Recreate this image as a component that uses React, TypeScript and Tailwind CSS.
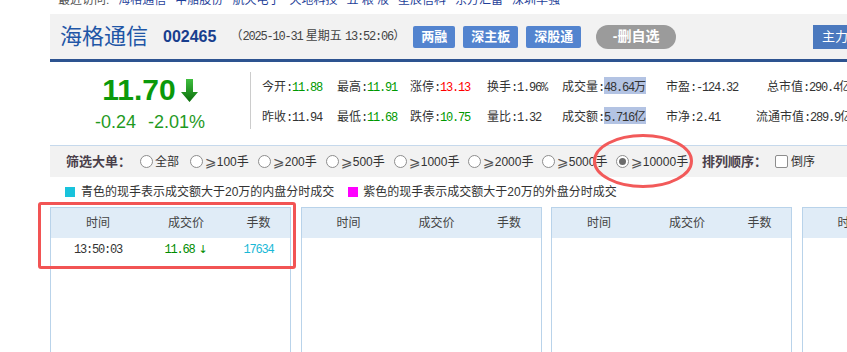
const mono = "font-['Liberation_Mono','Noto_Sans_CJK_SC',monospace] text-[12px] tracking-[-1.2px]";

type CellProps = {
  label: string;
  value: string;
  unit?: string;
  tone?: "up" | "down";
  hl?: boolean;
  w: string;
  right?: boolean;
};

function Cell({ label, value, unit, tone, hl, w, right }: CellProps) {
  const color = tone === "up" ? "text-[#ff0000]" : tone === "down" ? "text-[#009900]" : "text-[#333]";
  return (
    <div className={`${w} shrink-0 whitespace-nowrap ${right ? "text-right" : ""}`}>
      <span className="text-[12px] text-[#333]">{label}</span>
      <span className={`${mono} text-[#333]`}>:</span>
      <span className={hl ? "bg-[#b3c3e3]" : ""}>
        <span className={`${mono} ${color}`}>{value}</span>
        {unit && <span className={`text-[12px] ${color}`}>{unit}</span>}
      </span>
    </div>
  );
}

function Radio({ label, num, checked }: { label?: string; num?: string; checked?: boolean }) {
  return (
    <div className="flex items-center gap-[2px] text-[12px] text-[#333]">
      <span className="flex h-[13px] w-[13px] items-center justify-center rounded-full border border-[#8d8d8d] bg-white">
        {checked && <span className="h-[7px] w-[7px] rounded-full bg-[#6b6b6b]" />}
      </span>
      {label ? (
        <span>{label}</span>
      ) : (
        <span className="flex items-center">
          <span className="font-['DejaVu_Sans',sans-serif] text-[14px] leading-none text-[#555]">⩾</span>
          <span className="text-[12px]">{num}</span>
          <span>手</span>
        </span>
      )}
    </div>
  );
}

function Panel({ rows }: { rows?: boolean }) {
  return (
    <div className="h-[160px] w-[241px] shrink-0 border border-[#b9d3ea] bg-white">
      <div className="grid h-[30px] grid-cols-[94px_82px_1fr] items-center bg-[#e0ecf7] text-center text-[12px] text-[#444]">
        <span>时间</span>
        <span>成交价</span>
        <span>手数</span>
      </div>
      {rows && (
        <div className="grid h-[24px] grid-cols-[94px_82px_1fr] items-center text-center">
          <span className={`${mono} text-[#333]`}>13:50:03</span>
          <span className={`${mono} text-[#008c00]`}>
            11.68<span className="ml-[4px] font-['DejaVu_Sans',sans-serif] text-[11px] tracking-normal">↓</span>
          </span>
          <span className={`${mono} text-[#19b8d6]`}>17634</span>
        </div>
      )}
    </div>
  );
}

export default function App() {
  const recent = ["海格通信", "中船股份", "航天电子", "天地科技", "五 粮 液", "星辰信科", "东方汇富", "深圳华强"];

  return (
    <div className="relative h-[352px] w-[847px] overflow-hidden bg-white font-['Liberation_Sans','Noto_Sans_CJK_SC',sans-serif]">
      {/* recent visits (cut off at top) */}
      <div className="h-[14px] overflow-hidden pl-[58px]">
        <div className="-mt-[6px] flex gap-[9px] whitespace-nowrap text-[12px] leading-[12px]">
          <span className="text-[#555]">最近访问:</span>
          {recent.map((r) => (
            <span key={r} className="text-[#1f3f99]">{r}</span>
          ))}
        </div>
      </div>

      {/* header bar */}
      <div className="ml-[50px] flex h-[48px] items-center border-b-[3px] border-[#2d5390] bg-[#f2f2f2] pl-[10px]">
        <span className="text-[22px] leading-none text-[#1f56a6]">海格通信</span>
        <span className="ml-[15px] text-[16px] font-bold text-[#183e8e]">002465</span>
        <span className="ml-[14px] whitespace-nowrap text-[12px] text-[#444]">
          （<span className={mono}>2025-10-31</span> 星期五 <span className={mono}>13:52:06</span>）
        </span>
        <div className="ml-[8px] flex items-center gap-[8px]">
          {["两融", "深主板", "深股通"].map((b) => (
            <span key={b} className="flex h-[22px] items-center rounded-[2px] bg-[#5384cf] px-[8px] text-[13px] font-bold text-white">
              {b}
            </span>
          ))}
        </div>
        <span className="ml-[15px] flex h-[24px] w-[80px] items-center justify-center rounded-full bg-[#9b9b9b] text-[14px] font-bold text-white">
          -删自选
        </span>
        <span className="ml-auto flex h-[24px] w-[34px] items-center bg-[#4b79be] pl-[9px] text-[13px] text-white whitespace-nowrap">
          主力
        </span>
      </div>

      {/* quote info */}
      <div className="ml-[50px] flex h-[83px]">
        <div className="flex w-[200px] shrink-0 flex-col items-center pt-[13px]">
          <div className="flex items-start">
            <span className="text-[30px] font-bold leading-[30px] text-[#0a990a]">11.70</span>
            <svg className="ml-[5px] mt-[4px]" width="17" height="23" viewBox="0 0 17 23">
              <defs>
                <linearGradient id="arr" x1="0" y1="0" x2="0" y2="1">
                  <stop offset="0" stopColor="#3fbf3f" />
                  <stop offset="1" stopColor="#0b6e0b" />
                </linearGradient>
              </defs>
              <path d="M5 0 H12 V13 H17 L8.5 23 L0 13 H5 Z" fill="url(#arr)" />
            </svg>
          </div>
          <div className="mt-[8px] flex gap-[12px] text-[18px] leading-[18px] text-[#1f9a1f]">
            <span>-0.24</span>
            <span>-2.01%</span>
          </div>
        </div>
        <div className="mt-[10px] h-[57px] w-px shrink-0 bg-[#cccccc]" />
        <div className="flex flex-col gap-[10px] pl-[11px] pt-[14px]">
          <div className="flex h-[20px] items-center">
            <Cell w="w-[75px]" label="今开" value="11.88" tone="down" />
            <Cell w="w-[73px]" label="最高" value="11.91" tone="down" />
            <Cell w="w-[77px]" label="涨停" value="13.13" tone="up" />
            <Cell w="w-[75px]" label="换手" value="1.96%" />
            <Cell w="w-[104px]" label="成交量" value="48.64" unit="万" hl />
            <Cell w="w-[90px]" label="市盈" value="-124.32" />
            <Cell w="w-[95px]" label="总市值" value="290.4" unit="亿" right />
          </div>
          <div className="flex h-[20px] items-center">
            <Cell w="w-[75px]" label="昨收" value="11.94" />
            <Cell w="w-[73px]" label="最低" value="11.68" tone="down" />
            <Cell w="w-[77px]" label="跌停" value="10.75" tone="down" />
            <Cell w="w-[75px]" label="量比" value="1.32" />
            <Cell w="w-[104px]" label="成交额" value="5.716" unit="亿" hl />
            <Cell w="w-[90px]" label="市净" value="2.41" />
            <Cell w="w-[95px]" label="流通市值" value="289.9" unit="亿" right />
          </div>
        </div>
      </div>

      {/* filter bar */}
      <div className="ml-[50px] flex h-[32px] items-center border-t border-[#c6d9ec] bg-[#f2f2f2] pl-[16px] whitespace-nowrap">
        <span className="mr-[9px] text-[13px] font-bold text-[#4a3f4a]">筛选大单：</span>
        <div className="flex items-center">
          <div className="w-[50px]"><Radio label="全部" /></div>
          <div className="w-[68px]"><Radio num="100" /></div>
          <div className="w-[68px]"><Radio num="200" /></div>
          <div className="w-[68px]"><Radio num="500" /></div>
          <div className="w-[74px]"><Radio num="1000" /></div>
          <div className="w-[74px]"><Radio num="2000" /></div>
          <div className="w-[74px]"><Radio num="5000" /></div>
          <div className="w-[86px]"><Radio num="10000" checked /></div>
        </div>
        <span className="text-[13px] font-bold text-[#4a3f4a]">排列顺序：</span>
        <span className="ml-[8px] h-[13px] w-[13px] rounded-[2px] border border-[#8d8d8d] bg-white" />
        <span className="ml-[3px] text-[12px] text-[#333]">倒序</span>
      </div>

      {/* legend */}
      <div className="ml-[50px] flex h-[30px] items-center pl-[15px] text-[12px] text-[#333] whitespace-nowrap">
        <span className="h-[10px] w-[10px] bg-[#19c3dc]" />
        <span className="ml-[6px]">青色的现手表示成交额大于20万的内盘分时成交</span>
        <span className="ml-[14px] h-[10px] w-[10px] bg-[#ff00ff]" />
        <span className="ml-[5px]">紫色的现手表示成交额大于20万的外盘分时成交</span>
      </div>

      {/* trade panels */}
      <div className="ml-[50px] flex gap-[9.5px]">
        <Panel rows />
        <Panel />
        <Panel />
        <Panel />
      </div>

      {/* annotations */}
      <div className="absolute left-[38px] top-[202px] h-[67px] w-[258px] rounded-[3px] border-[3px] border-[#f25454]" />
      <svg className="absolute left-[592px] top-[133px]" width="102" height="56" viewBox="0 0 102 56">
        <ellipse cx="51" cy="28" rx="48.5" ry="25.5" fill="none" stroke="#f25a5a" strokeWidth="3" />
      </svg>
    </div>
  );
}
